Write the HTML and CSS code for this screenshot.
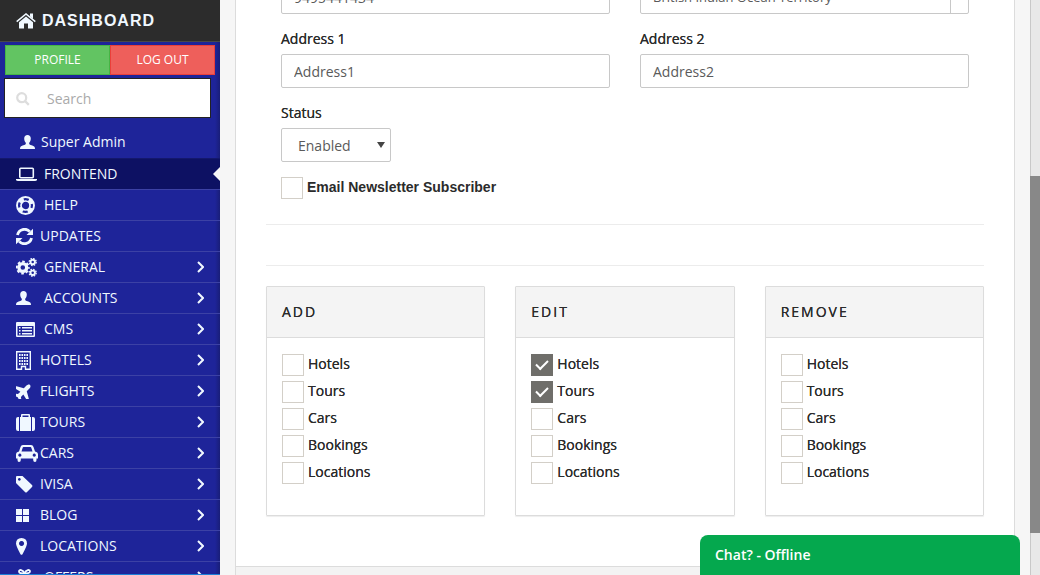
FILE: index.html
```html
<!DOCTYPE html>
<html lang="en">
<head>
<meta charset="utf-8">
<title>Dashboard</title>
<link rel="stylesheet" href="styles.css">
</head>
<body>
<svg class="sprite" aria-hidden="true">
  <symbol id="user" viewBox="0 0 15 14"><path d="M7.500 0C5.500 0 4.200 1.400 4.200 3.600C4.200 5.500 4.900 7 5.800 7.800V9C5.500 10 1.600 10.500.6 11.700C.1 12.400 0 13.200 0 14H15C15 13.200 14.900 12.400 14.400 11.700C13.400 10.500 9.500 10 9.200 9V7.800C10.100 7 10.800 5.500 10.800 3.600C10.800 1.400 9.500 0 7.500 0Z"/></symbol>
  <symbol id="chev" viewBox="0 0 7 12"><path d="M1 1L6 6L1 11" fill="none" stroke="currentColor" stroke-width="2"/></symbol>
</svg>
<div class="app">
  <aside class="sidebar">
    <a class="brand" href="#"><svg width="20" height="16" viewBox="0 0 20 16"><path d="M10 3.500L3 9.300V15Q3 15.500 3.500 15.500H8V10.500H12V15.500H16.500Q17 15.500 17 15V9.300Z"/><path d="M.7 8.600L10 1L19.300 8.600" fill="none" stroke="currentColor" stroke-width="1.600"/><path d="M14 .5H17V6L14 3.600Z"/></svg>DASHBOARD</a>
    <div class="side-body">
      <div class="account"><button class="btn profile">PROFILE</button><button class="btn logout">LOG OUT</button></div>
      <label class="search"><svg width="14" height="14" viewBox="0 0 14 14"><circle cx="5.700" cy="5.700" r="4.500" fill="none" stroke="currentColor" stroke-width="2.200"/><path d="M9 9L12.800 12.800" stroke="currentColor" stroke-width="2.400"/></svg><input type="search" placeholder="Search" aria-label="Search"></label>
      <div class="who"><svg width="15" height="14"><use href="#user"/></svg>Super Admin</div>
      <nav class="menu">
        <a class="item active" href="#"><span class="ico wide"><svg width="21" height="15" viewBox="0 0 21 15"><rect x="3.800" y="1.300" width="13.500" height="9.500" rx="1" fill="none" stroke="currentColor" stroke-width="1.600"/><path d="M0 12H21V13Q20.500 14 19 14H2Q.5 14 0 13Z"/></svg></span>FRONTEND</a>
        <a class="item" href="#"><span class="ico wide"><svg class="line" width="19" height="19" viewBox="0 0 19 19"><circle cx="9.500" cy="9.500" r="8.500" stroke-width="1.900"/><circle cx="9.500" cy="9.500" r="4.500" stroke-width="1.700"/><circle cx="9.500" cy="9.500" r="6.500" stroke-width="4.200" stroke-dasharray="5 5.210" stroke-dashoffset="-2.600"/></svg></span>HELP</a>
        <a class="item" href="#"><span class="ico"><svg width="17" height="17" viewBox="0 0 17 17"><path d="M1.500 7A7.200 7.200 0 0 1 13.800 3.600M15.500 10A7.200 7.200 0 0 1 3.200 13.400" fill="none" stroke="currentColor" stroke-width="2.800"/><path d="M17 .8V7H10.500ZM0 16.200V10H6.500Z"/></svg></span>UPDATES</a>
        <a class="item" href="#"><span class="ico wide"><svg class="line" width="21" height="19" viewBox="0 0 21 19"><circle cx="6.800" cy="9.500" r="3.900" stroke-width="3.200"/><circle cx="6.800" cy="9.500" r="6" stroke-width="1.800" stroke-dasharray="2.700 2.010" stroke-dashoffset="1.350"/><circle cx="16.700" cy="4" r="2.200" stroke-width="1.900"/><circle cx="16.700" cy="4" r="3.500" stroke-width="1.300" stroke-dasharray="1.500 1.250"/><circle cx="16.700" cy="14.800" r="2.200" stroke-width="1.900"/><circle cx="16.700" cy="14.800" r="3.500" stroke-width="1.300" stroke-dasharray="1.500 1.250"/></svg></span>GENERAL<svg class="chev" width="7" height="12"><use href="#chev"/></svg></a>
        <a class="item" href="#"><span class="ico wide"><svg width="15" height="14"><use href="#user"/></svg></span>ACCOUNTS<svg class="chev" width="7" height="12"><use href="#chev"/></svg></a>
        <a class="item" href="#"><span class="ico wide"><svg width="19" height="15" viewBox="0 0 19 15"><path fill-rule="evenodd" d="M1 0H18Q19 0 19 1V14Q19 15 18 15H1Q0 15 0 14V1Q0 0 1 0ZM1.500 4V13.500H17.500V4Z"/><path d="M3 5H4.500V6.500H3ZM6 5H16V6.500H6ZM3 8H4.500V9.500H3ZM6 8H16V9.500H6ZM3 11H4.500V12.500H3ZM6 11H16V12.500H6Z"/></svg></span>CMS<svg class="chev" width="7" height="12"><use href="#chev"/></svg></a>
        <a class="item" href="#"><span class="ico"><svg width="15" height="19" viewBox="0 0 15 19"><path d="M.7 .7H14.300V18.300H9.500V15.500H5.500V18.300H.7Z" fill="none" stroke="currentColor" stroke-width="1.400"/><path d="M3 4H12M3 7H12M3 10H12M3 13H12" stroke="currentColor" stroke-width="2" stroke-dasharray="1.600 .87"/></svg></span>HOTELS<svg class="chev" width="7" height="12"><use href="#chev"/></svg></a>
        <a class="item" href="#"><span class="ico"><svg width="15" height="15" viewBox="0 0 15 15"><path transform="translate(7.300 7.700) rotate(-45) scale(.0325) translate(-288 -256)" d="M480 192H375L260 -10Q255 -20 246 -20H190Q178 -20 181 -8L225 192H120L70 120Q66 113 57 113H10Q-1 113 2 125L46 256L2 387Q-1 399 10 399H57Q66 399 70 392L120 320H225L181 520Q178 532 190 532H246Q255 532 260 522L375 320H480C525 320 580 300 580 256S525 192 480 192Z"/></svg></span>FLIGHTS<svg class="chev" width="7" height="12"><use href="#chev"/></svg></a>
        <a class="item" href="#"><span class="ico"><svg width="19" height="17" viewBox="0 0 19 17"><path d="M3 3V17H2Q0 17 0 15V5Q0 3 2 3ZM16 3V17H17Q19 17 19 15V5Q19 3 17 3ZM4 3H5V1Q5 0 6 0H13Q14 0 14 1V3H15V17H4ZM6.500 3H12.500V1.500H6.500Z" fill-rule="evenodd"/></svg></span>TOURS<svg class="chev" width="7" height="12"><use href="#chev"/></svg></a>
        <a class="item" href="#"><span class="ico"><svg width="22" height="17" viewBox="0 0 22 17"><path fill-rule="evenodd" d="M3 6.500L4.500 2Q5 0 7 0H15Q17 0 17.500 2L19 6.500Q22 7 22 9.500V13.500H20.500V15Q20.500 17 19 17Q17.200 17 17.200 15V13.500H4.800V15Q4.800 17 3 17Q1.500 17 1.500 15V13.500H0V9.500Q0 7 3 6.500ZM5.500 6.400H16.500L15.300 2.700Q15.200 2 14.500 2H7.500Q6.800 2 6.700 2.700ZM3.800 8.600A1.600 1.600 0 1 0 3.900 8.600ZM18.200 8.600A1.600 1.600 0 1 0 18.300 8.600Z"/></svg></span>CARS<svg class="chev" width="7" height="12"><use href="#chev"/></svg></a>
        <a class="item" href="#"><span class="ico"><svg width="17" height="17" viewBox="0 0 17 17"><path fill-rule="evenodd" d="M0 1Q0 0 1 0H6.500L16 9Q17 10 16 11L11 16Q10 17 9 16L0 7ZM3.300 1.900A1.400 1.400 0 1 0 3.400 1.900Z"/></svg></span>IVISA<svg class="chev" width="7" height="12"><use href="#chev"/></svg></a>
        <a class="item" href="#"><span class="ico"><svg width="13" height="13" viewBox="0 0 13 13"><path d="M0 0H6V6H0ZM7 0H13V6H7ZM0 7H6V13H0ZM7 7H13V13H7Z"/></svg></span>BLOG<svg class="chev" width="7" height="12"><use href="#chev"/></svg></a>
        <a class="item" href="#"><span class="ico"><svg width="11" height="17" viewBox="0 0 11 17"><path fill-rule="evenodd" d="M5.500 0Q11 .3 11 5.500Q11 8 6.500 16.200Q5.500 17.500 4.500 16.200Q0 8 0 5.500Q0 .3 5.500 0ZM5.500 3A2.500 2.500 0 1 0 5.600 3Z"/></svg></span>LOCATIONS<svg class="chev" width="7" height="12"><use href="#chev"/></svg></a>
        <a class="item" href="#"><span class="ico wide"><svg width="17" height="16" viewBox="0 0 17 16"><path d="M8.500 4.500C7 .5 3 0 3 2.600C3 4.500 5.500 4.500 8.500 4.500C11.500 4.500 14 4.500 14 2.600C14 0 10 .5 8.500 4.500Z" fill="none" stroke="currentColor" stroke-width="1.800"/><path d="M0 5H17V9H0ZM1 10H16V16H1Z"/></svg></span>OFFERS<svg class="chev" width="7" height="12"><use href="#chev"/></svg></a>
      </nav>
    </div>
  </aside>
  <main class="main">
    <form class="panel">
      <div class="panel-body">
        <div class="fields">
          <input class="control" type="text" value="9495441434" aria-label="Mobile number">
          <div class="country"><select class="control" aria-label="Country"><option>British Indian Ocean Territory</option></select></div>
          <div class="field"><label class="label" for="a1">Address 1</label><input class="control" id="a1" type="text" value="Address1"></div>
          <div class="field"><label class="label" for="a2">Address 2</label><input class="control" id="a2" type="text" value="Address2"></div>
          <div class="field status"><label class="label" for="st">Status</label><div class="pick"><select class="control" id="st"><option>Enabled</option></select></div></div>
          <label class="check news"><input type="checkbox"><span>Email Newsletter Subscriber</span></label>
        </div>
        <hr class="rule">
        <hr class="rule second">
        <div class="cards">
          <section class="card"><h2 class="card-title">ADD</h2><div class="card-body">
            <label class="check"><input type="checkbox"><span>Hotels</span></label>
            <label class="check"><input type="checkbox"><span>Tours</span></label>
            <label class="check"><input type="checkbox"><span>Cars</span></label>
            <label class="check"><input type="checkbox"><span>Bookings</span></label>
            <label class="check"><input type="checkbox"><span>Locations</span></label></div></section>
          <section class="card"><h2 class="card-title">EDIT</h2><div class="card-body">
            <label class="check"><input type="checkbox" checked><span>Hotels</span></label>
            <label class="check"><input type="checkbox" checked><span>Tours</span></label>
            <label class="check"><input type="checkbox"><span>Cars</span></label>
            <label class="check"><input type="checkbox"><span>Bookings</span></label>
            <label class="check"><input type="checkbox"><span>Locations</span></label></div></section>
          <section class="card"><h2 class="card-title">REMOVE</h2><div class="card-body">
            <label class="check"><input type="checkbox"><span>Hotels</span></label>
            <label class="check"><input type="checkbox"><span>Tours</span></label>
            <label class="check"><input type="checkbox"><span>Cars</span></label>
            <label class="check"><input type="checkbox"><span>Bookings</span></label>
            <label class="check"><input type="checkbox"><span>Locations</span></label></div></section>
        </div>
      </div>
      <div class="panel-foot"></div>
    </form>
  </main>
  <div class="scrollbar"><div class="thumb"></div></div>
</div>
<button class="chat">Chat? - Offline</button>
</body>
</html>
```
FILE: styles.css
```css
* { box-sizing: border-box; }
body { margin: 0; font: 14px/20px "Open Sans", sans-serif; color: #2b2b2b; }
svg { display: block; flex: none; fill: currentColor; }
.line { fill: none; stroke: currentColor; }
.sprite { position: absolute; width: 0; height: 0; }
input, select, button { font: inherit; }
a { text-decoration: none; color: inherit; }
.app { display: grid; grid-template-columns: 220px 1fr 10px; height: 100vh; overflow: hidden; }

.sidebar { display: flex; flex-direction: column; overflow: hidden; color: #f0f8ff; background: #1e2499; border-bottom: 1px solid #1c7fd6; }
.brand { display: flex; flex: none; align-items: center; gap: 6px; height: 42px; padding-left: 16px; background: #2c2c2c; border-bottom: 1px solid #484848; font: bold 16px/20px "Liberation Sans", Arial, sans-serif; letter-spacing: 1px; }
.side-body { flex: 1; min-height: 0; overflow: hidden; background: linear-gradient(to left, #191e78, #1e2499 5px); }
.account { display: flex; padding: 3px 5px 0; }
.btn { flex: 1; height: 30px; padding: 0; color: #fff; font-size: 12px; }
.profile { background: #62c462; border: 1px solid #45b545; }
.logout { background: #ee5f5b; border: 1px solid #ea3f3a; }
.search { display: flex; align-items: center; gap: 17px; height: 40px; margin: 3px 9px 0 4px; padding: 2px 0 0 11px; background: #fff; border: 1px solid #222; color: #ddd; }
.search input { flex: 1; min-width: 0; border: 0; outline: 0; padding: 0; background: none; }
.search input::placeholder { color: #aaa; }
.who { display: flex; align-items: center; gap: 6px; height: 41px; padding: 7px 0 0 20px; border-bottom: 1px solid #14186c; }
.item { position: relative; display: flex; align-items: center; height: 31px; padding: 0 16px; border-bottom: 1px solid #3c41a5; }
.ico { flex: none; width: 24px; }
.wide { width: 28px; }
.chev { margin-left: auto; }
.active { background: #0d1163; }
.active::after { content: ""; position: absolute; right: 0; top: 8px; border: 7px solid transparent; border-right-color: #f6f6f6; border-left: 0; }

.main { padding: 0 15px; background: #f6f6f6; overflow: hidden; min-width: 0; }
.panel { border: 1px solid #dcdcdc; border-width: 0 1px; background: #fff; margin-top: -20px; }
.panel-body { padding: 0 30px 50px; }
.fields { display: grid; grid-template-columns: 1fr 1fr; gap: 15px 30px; padding: 0 15px 25px; }
.field { display: grid; gap: 5px; min-width: 0; }
.label, .check span { text-shadow: 0 0 0 #2b2b2b; }
.control { display: block; width: 100%; height: 34px; padding: 0 12px; color: #5a5a5a; background: #fff; border: 1px solid #c8c8c8; border-radius: 2px; appearance: none; outline: 0; }
.country, .pick { position: relative; }
.country select { font-size: 13px; }
.country::after { content: ""; position: absolute; right: 18px; top: 0; height: 34px; border-right: 1px solid #c8c8c8; }
.status, .news { grid-column: 1 / -1; }
.pick { width: 110px; }
.pick select { padding: 2px 16px 0; }
.pick::after { content: ""; position: absolute; right: 6px; top: 14px; border: 4px solid transparent; border-top: 6px solid #444; border-bottom: 0; pointer-events: none; }
.check { display: flex; align-items: flex-start; gap: 4px; height: 22px; }
.check input { appearance: none; flex: none; display: grid; place-items: center; width: 22px; height: 22px; margin: 0; background: #fff; border: 1px solid #d3cfc8; }
.check input:checked { background: #6f6e6a; border-color: #6f6e6a; padding-bottom: 3px; }
.check input:checked::after { content: ""; width: 10px; height: 5px; border: solid #fff; border-width: 0 0 2px 2px; transform: rotate(-45deg); }
.news span { font: bold 14px/20px "Liberation Sans", Arial, sans-serif; text-shadow: none; }
.rule { height: 1px; margin: 0; border: 0; background: #ececec; }
.second { margin: 40px 0 20px; }
.cards { display: grid; grid-template-columns: repeat(3, 1fr); gap: 30px; }
.card { border: 1px solid #dcdcdc; border-radius: 1px; box-shadow: 0 1px 1px #eee; }
.card-title { margin: 0; padding: 15px; font: inherit; letter-spacing: 2px; background: #f4f4f4; border-bottom: 1px solid #dcdcdc; text-shadow: 0 0 0 #2b2b2b; }
.card-body { display: grid; gap: 5px; padding: 16px 15px 31px; }
.panel-foot { height: 60px; background: #f3f3f3; border-top: 1px solid #dcdcdc; }

.scrollbar { display: grid; grid-template-rows: 176fr 357fr 42fr; background: #e8e8e8; box-shadow: inset 1px 0 #c8c8c8; }
.thumb { grid-row: 2; background: #888; }
.chat { position: fixed; right: 20px; bottom: 0; width: 320px; height: 40px; padding: 0 15px; text-align: left; color: #fff; background: #05a84e; border: 0; border-radius: 8px 8px 0 0; font-weight: 600; }
```
